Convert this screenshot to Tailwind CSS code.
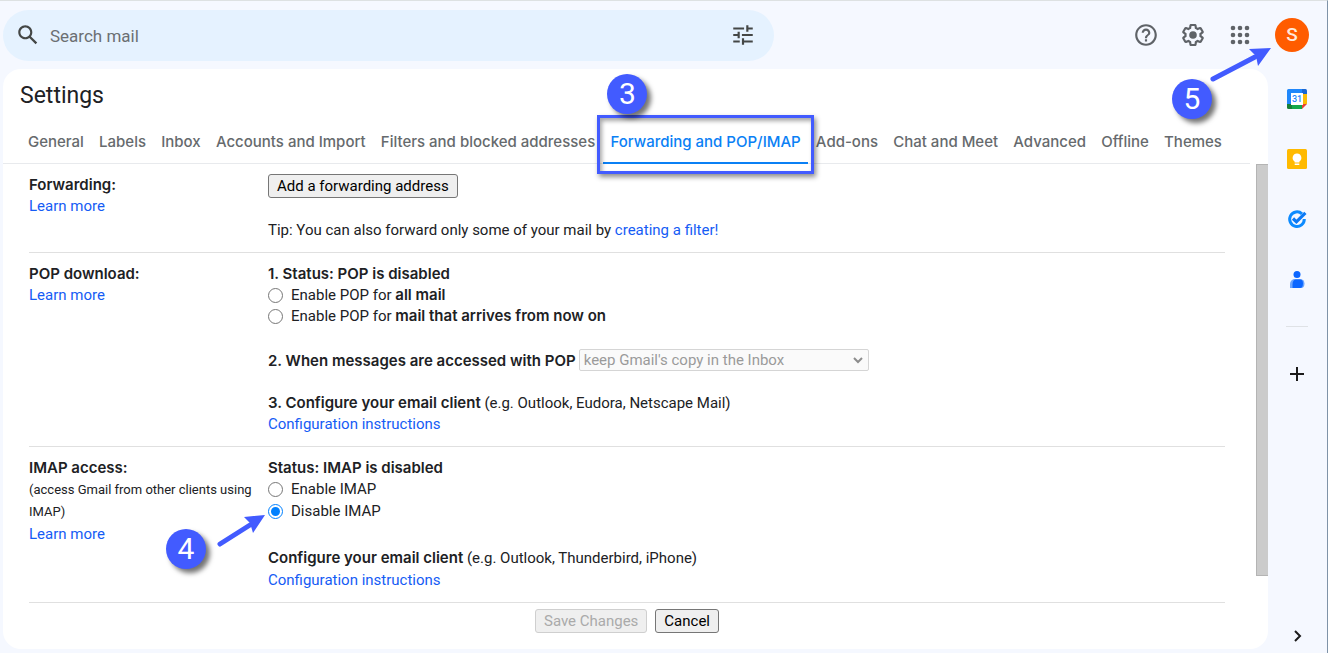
<!DOCTYPE html>
<html lang="en">
<head>
<meta charset="utf-8">
<title>Settings</title>
<script src="https://cdn.jsdelivr.net/npm/@tailwindcss/browser@4"></script>
</head>
<body class="flex min-h-screen flex-col overflow-x-hidden border-t border-r border-t-[#dde1e2] border-r-[#7f93a8] bg-[#f5f8ff] font-['Roboto',sans-serif] text-[15px] leading-[21px] text-[#202124]">

<header class="flex items-center justify-between pt-[9px] pr-[18px] pb-2 pl-[3px]">
  <form class="flex h-[51px] w-[59%] items-center rounded-full bg-[#e5f2ff] px-3">
    <button type="button" aria-label="Search" class="mb-[2px] text-[#444746]">
      <svg class="size-[26px]" viewBox="0 0 24 24" fill="currentColor"><path d="M20.49 19l-5.73-5.73C15.53 12.2 16 10.91 16 9.5 16 5.91 13.09 3 9.5 3S3 5.91 3 9.5 5.91 16 9.5 16c1.41 0 2.7-.47 3.77-1.24L19 20.49 20.49 19zM5 9.5C5 7.01 7.01 5 9.5 5S14 7.01 14 9.5 11.99 14 9.5 14 5 11.99 5 9.5z"/></svg>
    </button>
    <input type="text" aria-label="Search mail" placeholder="Search mail" class="ml-[9px] min-w-0 flex-1 bg-transparent text-[17px] leading-6 outline-none placeholder:text-[#6b6f73]">
    <button type="button" aria-label="Show search options" class="mr-[6px] mb-[2px] text-[#444746]">
      <svg class="size-[26px]" viewBox="0 0 24 24" fill="currentColor"><path d="M3 17v2h6v-2H3zM3 5v2h10V5H3zm10 16v-2h8v-2h-8v-2h-2v6h2zM7 9v2H3v2h4v2h2V9H7zm14 4v-2H11v2h10zm-6-4h2V7h4V5h-4V3h-2v6z"/></svg>
    </button>
  </form>
  <div class="mb-[2px] flex items-center text-[#5f6368]">
    <button type="button" aria-label="Support" class="mr-[21px]">
      <svg class="size-[26px]" viewBox="0 0 24 24" fill="currentColor"><path d="M11 18h2v-2h-2v2zm1-16C6.48 2 2 6.48 2 12s4.48 10 10 10 10-4.48 10-10S17.52 2 12 2zm0 18c-4.41 0-8-3.59-8-8s3.59-8 8-8 8 3.59 8 8-3.59 8-8 8zm0-14c-2.21 0-4 1.79-4 4h2c0-1.1.9-2 2-2s2 .9 2 2c0 2-3 1.75-3 5h2c0-2.25 3-2.5 3-5 0-2.21-1.79-4-4-4z"/></svg>
    </button>
    <button type="button" aria-label="Settings" class="mr-[21px]">
      <svg class="size-[26px]" viewBox="0 0 24 24" fill="currentColor"><path d="M13.85 22.25h-3.7c-.74 0-1.36-.54-1.45-1.27l-.27-1.89c-.27-.14-.53-.29-.79-.46l-1.8.72c-.7.26-1.47-.03-1.81-.65L2.2 15.53c-.35-.66-.2-1.44.36-1.88l1.53-1.19c-.01-.15-.02-.3-.02-.46 0-.15.01-.31.02-.46l-1.52-1.19c-.59-.45-.74-1.26-.37-1.88l1.85-3.19c.34-.62 1.11-.9 1.79-.63l1.81.73c.26-.17.52-.32.78-.46l.27-1.91c.09-.7.71-1.25 1.44-1.25h3.7c.74 0 1.36.54 1.45 1.27l.27 1.89c.27.14.53.29.79.46l1.8-.72c.71-.26 1.48.03 1.82.65l1.84 3.18c.36.66.2 1.44-.36 1.88l-1.52 1.19c.01.15.02.3.02.46s-.01.31-.02.46l1.52 1.19c.56.45.72 1.23.37 1.86l-1.86 3.22c-.34.62-1.11.9-1.8.63l-1.8-.72c-.26.17-.52.32-.78.46l-.27 1.91c-.1.68-.72 1.22-1.46 1.22zm-3.23-2h2.76l.37-2.55.53-.22c.44-.18.88-.44 1.34-.78l.45-.34 2.38.96 1.38-2.4-2.03-1.58.07-.56c.03-.26.06-.51.06-.78s-.03-.53-.06-.78l-.07-.56 2.03-1.58-1.39-2.4-2.39.96-.45-.35c-.42-.32-.87-.58-1.33-.77l-.52-.22-.37-2.55h-2.76l-.37 2.55-.53.21c-.44.19-.88.44-1.34.79l-.45.33-2.38-.95-1.39 2.39 2.03 1.58-.07.56a7 7 0 0 0-.06.79c0 .26.02.53.06.78l.07.56-2.03 1.58 1.38 2.4 2.39-.96.45.35c.43.33.86.58 1.33.77l.53.22.38 2.55z"/><circle cx="12" cy="12" r="3.5"/></svg>
    </button>
    <button type="button" aria-label="Google apps" class="mr-[22px]">
      <svg class="size-[26px]" viewBox="0 0 26 26" fill="currentColor"><circle cx="6" cy="6" r="2.3"/><circle cx="13" cy="6" r="2.3"/><circle cx="20" cy="6" r="2.3"/><circle cx="6" cy="13" r="2.3"/><circle cx="13" cy="13" r="2.3"/><circle cx="20" cy="13" r="2.3"/><circle cx="6" cy="20" r="2.3"/><circle cx="13" cy="20" r="2.3"/><circle cx="20" cy="20" r="2.3"/></svg>
    </button>
    <div class="relative">
      <button type="button" aria-label="Account" class="flex size-[34px] items-center justify-center rounded-full bg-[#ff5c00] text-[19px] font-medium text-[#ffe9dc]">S</button>
      <svg class="absolute top-7 right-[38px] z-10 h-9 w-[62px]" viewBox="0 0 62 36" aria-hidden="true"><path d="M4 33L46 11" stroke="#425bff" stroke-width="5" stroke-linecap="round"/><path d="M62 2L40 3l7 7 2 10z" fill="#425bff"/></svg>
      <span class="absolute top-[61px] right-[97px] z-10 flex size-10 items-center justify-center rounded-full bg-[#425bff] text-[30px] leading-none text-white shadow-[4px_4px_5px_rgba(0,0,0,0.55)]">5</span>
    </div>
  </div>
</header>

<div class="flex flex-1 pb-1 pl-[3px]">
  <main class="flex min-w-0 flex-1 flex-col rounded-[18px] bg-white">
    <h1 class="pt-3 pl-[17px] text-[23px] leading-[30px]">Settings</h1>
    <nav class="mt-2 mr-[18px] flex justify-between border-b border-[#e8eaed] pr-[21px] pl-[18px] font-['Inter',sans-serif] font-medium whitespace-nowrap text-[#666a6d]">
      <a href="#" class="px-[7px] pt-3 pb-[11px]">General</a>
      <a href="#" class="px-[7px] pt-3 pb-[11px]">Labels</a>
      <a href="#" class="px-[7px] pt-3 pb-[11px]">Inbox</a>
      <a href="#" class="px-[7px] pt-3 pb-[11px]">Accounts and Import</a>
      <a href="#" class="px-[7px] pt-3 pb-[11px]">Filters and blocked addresses</a>
      <a href="#" aria-current="page" class="relative px-[7px] pt-3 pb-[11px] text-[#0a80f5]">Forwarding and POP/IMAP
        <span class="absolute inset-x-0 -bottom-px h-[2px] bg-[#0a80f5]"></span>
        <span class="absolute -inset-x-[6px] -top-1 -bottom-[11px] border-3 border-[#425bff] shadow-[2px_3px_5px_rgba(0,0,0,0.45),inset_2px_3px_4px_rgba(0,0,0,0.35)]"></span>
        <span class="absolute -top-[45px] left-1 flex size-10 items-center justify-center rounded-full bg-[#425bff] font-['Roboto',sans-serif] text-[30px] leading-none font-normal text-white shadow-[4px_4px_5px_rgba(0,0,0,0.55)]">3</span>
      </a>
      <a href="#" class="px-[7px] pt-3 pb-[11px]">Add-ons</a>
      <a href="#" class="px-[7px] pt-3 pb-[11px]">Chat and Meet</a>
      <a href="#" class="px-[7px] pt-3 pb-[11px]">Advanced</a>
      <a href="#" class="px-[7px] pt-3 pb-[11px]">Offline</a>
      <a href="#" class="px-[7px] pt-3 pb-[11px]">Themes</a>
    </nav>

    <div class="flex flex-1">
      <form class="mr-[31px] ml-[26px] min-w-0 flex-1">
        <section class="grid grid-cols-[239px_1fr] border-b border-[#e0e0e0] pt-[10px] pb-[11px]">
          <div class="leading-[22px]"><h2 class="font-['Inter',sans-serif] leading-[21px] font-semibold">Forwarding:</h2><a href="#" class="text-[#155cf5]">Learn more</a></div>
          <div>
            <button type="button" class="block h-6 rounded-[3px] border border-[#767676] bg-[#efefef] px-2 text-black">Add a forwarding address</button>
            <p class="mt-[22px]">Tip: You can also forward only some of your mail by <a href="#" class="text-[#155cf5]">creating a filter!</a></p>
          </div>
        </section>

        <section class="grid grid-cols-[239px_1fr] border-b border-[#e0e0e0] pt-[10px] pb-[11px]">
          <div><h2 class="font-['Inter',sans-serif] leading-[22px] font-semibold">POP download:</h2><a href="#" class="text-[#155cf5]">Learn more</a></div>
          <div>
            <h3 class="font-['Inter',sans-serif] leading-[22px] font-semibold">1. Status: POP is disabled</h3>
            <label class="flex items-center"><input type="radio" name="pop" class="mr-2 size-[15px]"><span>Enable POP for <b class="font-['Inter',sans-serif] leading-none font-semibold">all mail</b></span></label>
            <label class="flex items-center"><input type="radio" name="pop" class="mr-2 size-[15px]"><span>Enable POP for <b class="font-['Inter',sans-serif] leading-none font-semibold">mail that arrives from now on</b></span></label>
            <div class="mt-[22px] flex items-center">
              <label for="popAction" class="font-['Inter',sans-serif] font-semibold">2. When messages are accessed with POP</label>
              <span class="relative ml-[3px] block">
                <select id="popAction" disabled class="block h-[22px] w-[290px] appearance-none rounded-[2px] border border-[#d5d5d5] bg-[#fafafa] pl-1 leading-5 text-[#9a9a9a]"><option>keep Gmail's copy in the Inbox</option></select>
                <svg class="pointer-events-none absolute top-2 right-[5px] h-[7px] w-3" viewBox="0 0 12 7" fill="none" stroke="#8c8c8c" stroke-width="2"><path d="M2 1l4 4 4-4"/></svg>
              </span>
            </div>
            <p class="mt-[22px]"><b class="font-['Inter',sans-serif] leading-none font-semibold">3. Configure your email client</b> (e.g. Outlook, Eudora, Netscape Mail)</p>
            <a href="#" class="text-[#155cf5]">Configuration instructions</a>
          </div>
        </section>

        <section class="grid grid-cols-[239px_1fr] border-b border-[#e0e0e0] pt-[10px] pb-[11px] leading-[22px]">
          <div><h2 class="font-['Inter',sans-serif] font-semibold">IMAP access:</h2><p class="text-[13px]">(access Gmail from other clients using IMAP)</p><a href="#" class="text-[#155cf5]">Learn more</a></div>
          <div>
            <h3 class="font-['Inter',sans-serif] leading-[21px] font-semibold">Status: IMAP is disabled</h3>
            <label class="flex items-center"><input type="radio" name="imap" class="mr-2 size-[15px]">Enable IMAP</label>
            <label class="relative flex items-center"><input type="radio" name="imap" checked class="mr-2 size-[15px] accent-[#0080ff]">Disable IMAP
              <svg class="absolute top-[14px] -left-[52px] h-[34px] w-[49px]" viewBox="0 0 49 34" aria-hidden="true"><path d="M4 30L34 11" stroke="#425bff" stroke-width="5" stroke-linecap="round"/><path d="M49 1L28 3l6 6 3 10z" fill="#425bff"/></svg>
              <span class="absolute top-[29px] -left-[102px] flex size-10 items-center justify-center rounded-full bg-[#425bff] text-[30px] leading-none text-white shadow-[4px_4px_5px_rgba(0,0,0,0.55)]">4</span>
            </label>
            <p class="mt-[25px]"><b class="font-['Inter',sans-serif] leading-none font-semibold">Configure your email client</b> (e.g. Outlook, Thunderbird, iPhone)</p>
            <a href="#" class="text-[#155cf5]">Configuration instructions</a>
          </div>
        </section>

        <div class="flex justify-center gap-2 pt-[6px]">
          <button type="button" disabled class="h-6 rounded-[3px] border border-[#cfcfcf] bg-[#efefef] px-2 text-[#aaaaaa]">Save Changes</button>
          <button type="button" class="h-6 rounded-[3px] border border-[#767676] bg-[#efefef] px-2 text-black">Cancel</button>
        </div>
      </form>
      <div class="w-3"><div class="h-[85%] border border-r-0 border-[#b4b4b4] bg-[#cbcbcb]"></div></div>
    </div>
  </main>

  <aside class="flex w-[59px] flex-col items-center pt-5 pr-px">
    <a href="#" aria-label="Calendar"><svg class="size-5" viewBox="0 0 20 20"><path d="M1.500 0H15v5H5v10H0V1.500A1.500 1.500 0 0 1 1.500 0z" fill="#1f87fb"/><path d="M0 15h5v5H1.500A1.500 1.500 0 0 1 0 18.500z" fill="#188038"/><path d="M5 15h10v5H5z" fill="#12a84b"/><path d="M15 5h5v10h-5z" fill="#fbbc04"/><path d="M15 0h3.500A1.500 1.500 0 0 1 20 1.500V5h-5z" fill="#1967d2"/><path d="M15 15h5l-5 5z" fill="#ea4335"/><path d="M4 4h12v12H4z" fill="#fff"/><text x="10" y="13" text-anchor="middle" font-size="9" font-weight="500" font-family="Roboto" fill="#1f87fb">31</text></svg></a>
    <a href="#" aria-label="Keep" class="mt-10"><svg class="size-5" viewBox="0 0 20 20"><rect width="20" height="20" rx="1.500" fill="#ffba00"/><path d="M10 4.500a4.300 4.300 0 0 0-2.400 7.900v1.100h4.800v-1.100A4.300 4.300 0 0 0 10 4.500zM7.700 14.500h4.600v1.400H7.700z" fill="#fff"/></svg></a>
    <a href="#" aria-label="Tasks" class="mt-10"><svg class="size-5" viewBox="0 0 20 20" fill="none"><path d="M15 4.800A7.300 7.300 0 1 0 17.300 10" stroke="#0d8bff" stroke-width="3"/><path d="M6 9.500l3.400 3.300 9-9" stroke="#0b79f5" stroke-width="3.200"/></svg></a>
    <a href="#" aria-label="Contacts" class="mt-[41px]"><svg class="size-5" viewBox="0 0 20 20"><circle cx="10" cy="4.500" r="3.500" fill="#0b66ff"/><path d="M3 18v-4a5 5 0 0 1 5-5h5a4.500 4.500 0 0 1 4.500 4.500c0 2.500-1 4.500-3.500 4.500z" fill="#6aa5ff"/><path d="M5.500 18v-3.500c0-3.500 1.500-5 3.500-5h4c2 0 3 1.500 3 4S15 18 13 18z" fill="#0b66ff"/></svg></a>
    <hr class="mt-9 w-[22px] border-[#dfe2e6]">
    <button type="button" aria-label="Get add-ons" class="mt-[39px]"><svg class="size-4" viewBox="0 0 16 16" stroke="#1b1b1b" stroke-width="2"><path d="M8 1v14M1 8h14"/></svg></button>
    <button type="button" aria-label="Hide side panel" class="mt-auto mb-[7px]"><svg class="size-3" viewBox="0 0 12 12" fill="none" stroke="#1b1b1b" stroke-width="2"><path d="M4 1l5 5-5 5"/></svg></button>
  </aside>
</div>
</body>
</html>
